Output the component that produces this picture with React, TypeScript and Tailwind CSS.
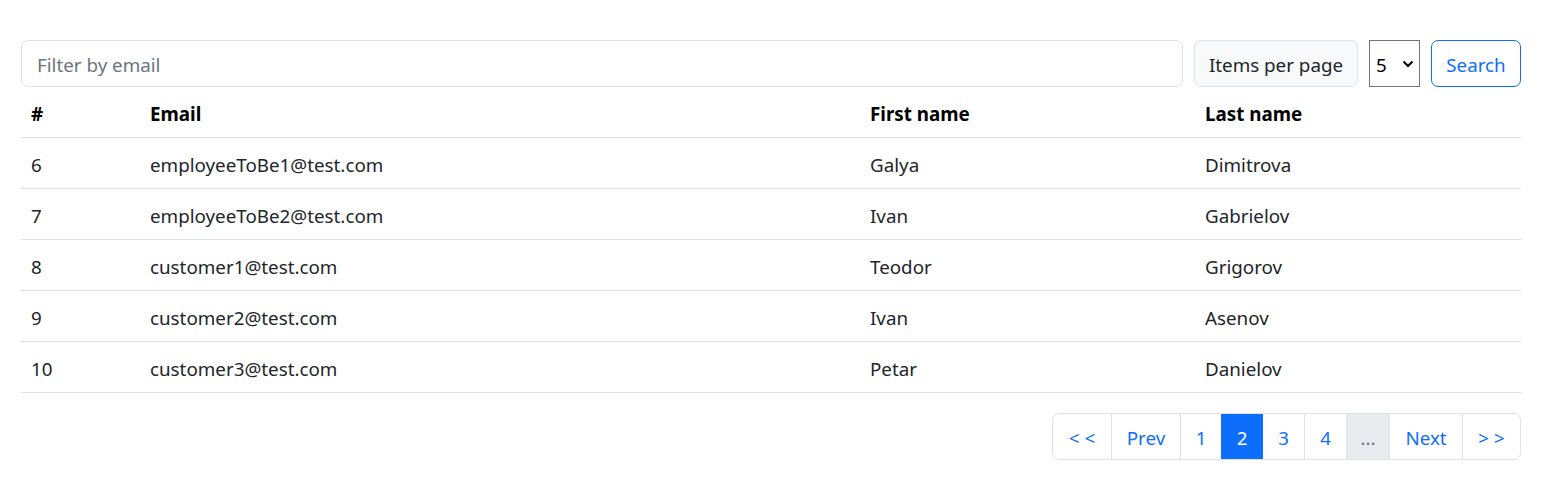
import React from "react";

const rows = [
  ["6", "employeeToBe1@test.com", "Galya", "Dimitrova"],
  ["7", "employeeToBe2@test.com", "Ivan", "Gabrielov"],
  ["8", "customer1@test.com", "Teodor", "Grigorov"],
  ["9", "customer2@test.com", "Ivan", "Asenov"],
  ["10", "customer3@test.com", "Petar", "Danielov"],
];

export default function App() {
  return (
    <div className="bg-white w-[1560px] h-[488px] pt-[40px] px-[21px] text-[#212529] font-['Noto_Sans',sans-serif] text-[18.8px]">
      <div className="w-[1500px]">
        <div className="flex items-stretch gap-[11px] h-[47px]">
          <div className="flex-1 border border-[#dee2e6] rounded-[7px] flex items-center pl-[15px] pt-[4px] text-[#6c757d]">
            Filter by email
          </div>
          <div className="w-[164px] border border-[#dee2e6] rounded-[7px] bg-[#f8f9fa] flex items-center justify-center pt-[4px] text-[#212529]">
            Items per page
          </div>
          <div className="w-[51px] border border-[#767676] flex items-center justify-between pl-[6px] pr-[5px] text-black">
            <span className="pt-[4px]">5</span>
            <svg width="12" height="8" viewBox="0 0 12 8">
              <path d="M1.5 1.5 L6 6 L10.5 1.5" fill="none" stroke="#000" strokeWidth="2" />
            </svg>
          </div>
          <div className="w-[90px] border border-[#0d6efd] rounded-[7px] flex items-center justify-center pt-[4px] text-[#0d6efd]">
            Search
          </div>
        </div>
        <div className="flex h-[51px] items-center pt-[4px] border-b border-[#dee2e6] font-bold text-black">
          <div className="w-[119px] pl-[10px]">#</div>
          <div className="w-[720px] pl-[10px]">Email</div>
          <div className="w-[335px] pl-[10px]">First name</div>
          <div className="flex-1 pl-[10px]">Last name</div>
        </div>
        {rows.map((r) => (
          <div key={r[0]} className="flex h-[51px] items-center pt-[4px] border-b border-[#dee2e6] text-[#212529]">
            <div className="w-[119px] pl-[10px]">{r[0]}</div>
            <div className="w-[720px] pl-[10px]">{r[1]}</div>
            <div className="w-[335px] pl-[10px]">{r[2]}</div>
            <div className="flex-1 pl-[10px]">{r[3]}</div>
          </div>
        ))}
        <div className="flex justify-end mt-[20px]">
          <div className="flex h-[47px] border border-[#dee2e6] rounded-[7px] overflow-hidden text-[#0d6efd]">
            <div className="w-[58px] flex items-center justify-center pt-[4px]">&lt; &lt;</div>
            <div className="w-[69px] flex items-center justify-center pt-[4px] border-l border-[#dee2e6]">Prev</div>
            <div className="w-[41px] flex items-center justify-center pt-[4px] border-l border-[#dee2e6]">1</div>
            <div className="w-[42px] flex items-center justify-center pt-[4px] bg-[#0d6efd] text-white">2</div>
            <div className="w-[41px] flex items-center justify-center pt-[4px]">3</div>
            <div className="w-[42px] flex items-center justify-center pt-[4px] border-l border-[#dee2e6]">4</div>
            <div className="w-[43px] flex items-center justify-center pt-[4px] border-l border-[#dee2e6] bg-[#e9ecef] text-[#6c757d]">...</div>
            <div className="w-[73px] flex items-center justify-center pt-[4px] border-l border-[#dee2e6]">Next</div>
            <div className="w-[58px] flex items-center justify-center pt-[4px] border-l border-[#dee2e6]">&gt; &gt;</div>
          </div>
        </div>
      </div>
    </div>
  );
}
